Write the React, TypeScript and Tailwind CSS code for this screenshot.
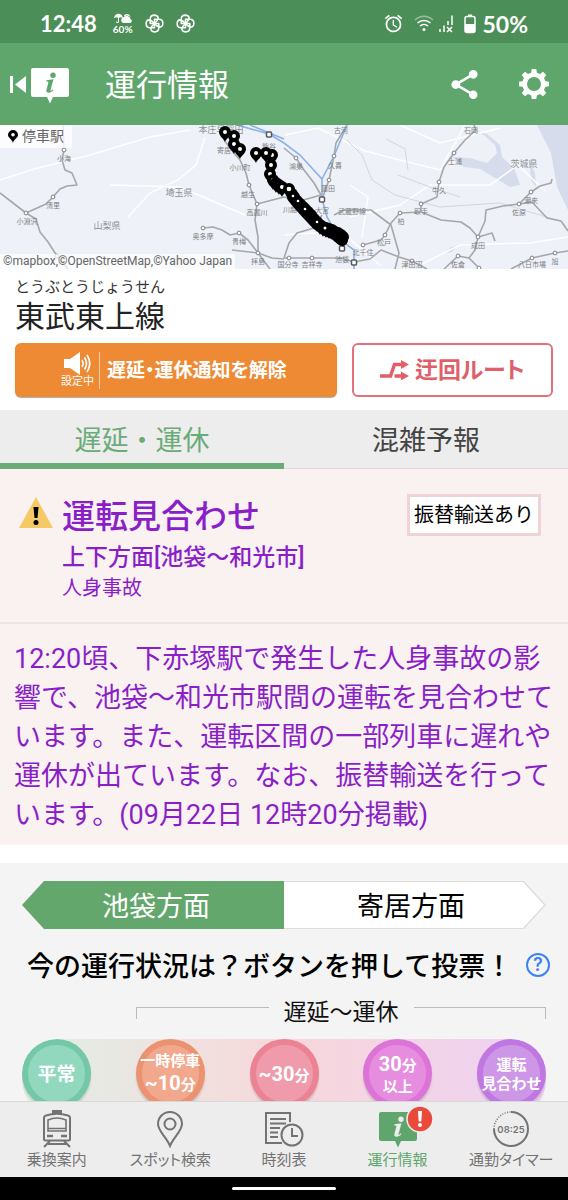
import React from "react";
import { MdAlarm, MdShare } from "react-icons/md";

const GEAR_ANGLES = [0, 45, 90, 135, 180, 225, 270, 315];
const BLADE_ANGLES = [0, 90, 180, 270];

function InfoBubble({ className, mark }: { className: string; mark: string }) {
  return (
    <svg viewBox="0 0 38 36" className={className} aria-hidden="true">
      <path d="M2 0h34a2 2 0 0 1 2 2v25a2 2 0 0 1-2 2H22l-3 6.500L16 29H2a2 2 0 0 1-2-2V2a2 2 0 0 1 2-2Z" fill="currentColor" />
      <circle cx="22" cy="7.200" r="2.700" fill={mark} />
      <path d="M15.500 12.200l7-1-3 10.800c-.3 1.200.4 1.300 2-.7l.9.700c-2.200 3.200-8 4-7 0l2-7.500c.2-.9-.5-1-2.100-1Z" fill={mark} />
    </svg>
  );
}

function Pinwheel({ className }: { className: string }) {
  return (
    <svg viewBox="-10 -10 20 20" className={className} fill="none" stroke="currentColor" strokeWidth="1.700" strokeLinejoin="round" aria-hidden="true">
      {BLADE_ANGLES.map((a) => (
        <path key={a} d="M0 0H-4.500V-4.500Q-4.500-8.800 0-8.800 3.800-8.500 3.800-5.500 3.500-3 0 0Z" transform={`rotate(${a})`} />
      ))}
    </svg>
  );
}

function StatusBar() {
  return (
    <div className="flex h-[43px] shrink-0 items-center justify-between bg-[#4b8e57] px-10 pt-1 font-['Lato',sans-serif] text-white">
      <div className="flex items-center">
        <span className="text-[22px] leading-6 font-bold">12:48</span>
        <span className="ml-4 flex w-5 flex-col items-center">
          <svg viewBox="0 0 20 11" className="h-[11px] w-5" fill="currentColor" aria-hidden="true">
            <path d="M1 5C1.500 2 3.500.8 5.500.8S9.500 2 10 5L7.500 4.300 6 4.800V8.500a1.500 1.500 0 0 1-3 0h1c0 .7 1 .7 1 0V4.800L3.500 4.300Z" />
            <path d="M10 10a3 3 0 0 1 .6-5.700A4 4 0 0 1 17.500 6a2.200 2.200 0 0 1 0 4Z" />
            <path d="M11 2.500a3.500 3.500 0 0 1 6 .6l1.200 1.600C16 2 13 2 11 3.400Z" />
          </svg>
          <span className="text-[10px] leading-[10px] font-bold">60%</span>
        </span>
        <Pinwheel className="ml-3 size-[19px]" />
        <Pinwheel className="ml-3 size-[19px]" />
      </div>
      <div className="flex items-center">
        <MdAlarm className="size-[21px]" />
        <svg viewBox="0 0 20 17" className="ml-2.5 h-[17px] w-5" fill="none" stroke="currentColor" strokeWidth="1.600" aria-hidden="true">
          <path d="M1 5a13 13 0 0 1 18 0" opacity=".4" />
          <path d="M3.500 8a9.500 9.500 0 0 1 13 0M6 11a6 6 0 0 1 8 0" />
          <circle cx="10" cy="14.500" r="1.500" fill="currentColor" stroke="none" />
        </svg>
        <svg viewBox="0 0 16 18" className="ml-1 h-[18px] w-4" fill="none" stroke="currentColor" strokeWidth="1.500" aria-hidden="true">
          <path d="M2 14v3M6 10.500V17M10 6v4M14 .5V10M9 12l5 5M14 12l-5 5" />
        </svg>
        <svg viewBox="0 0 12 20" className="ml-2.5 h-5 w-3" aria-hidden="true">
          <path d="M4 .5h4V3H4Z" fill="currentColor" />
          <rect x="1" y="2.500" width="10" height="16" rx="2" fill="none" stroke="currentColor" strokeWidth="1.500" />
          <path d="M1 10h10v7a2 2 0 0 1-2 2H3a2 2 0 0 1-2-2Z" fill="currentColor" />
        </svg>
        <span className="ml-1.5 text-[23px] leading-6 font-bold">50%</span>
      </div>
    </div>
  );
}

function Header() {
  return (
    <header className="flex h-[82px] shrink-0 items-center bg-[#5fa66d] pr-[19px] pl-2.5 text-white">
      <button type="button" aria-label="戻る" className="flex items-center gap-[5px]">
        <svg viewBox="0 0 16 17" className="h-[17px] w-4" fill="currentColor" aria-hidden="true">
          <path d="M0 0h3v17H0ZM16 0v17L5 8.500Z" />
        </svg>
        <InfoBubble className="mt-1 h-9 w-[38px]" mark="#5fa66d" />
      </button>
      <h1 className="ml-9 flex-1 pt-1 text-[31px] leading-10 font-normal">運行情報</h1>
      <button type="button" aria-label="共有" className="mr-[37px]">
        <MdShare className="size-[35px]" />
      </button>
      <button type="button" aria-label="設定">
        <svg viewBox="-15 -15 30 30" className="size-[30px]" aria-hidden="true">
          <circle r="9.300" fill="none" stroke="currentColor" strokeWidth="4.600" />
          {GEAR_ANGLES.map((a) => (
            <path key={a} d="M-3-10.500L-2.300-15H2.300L3-10.500Z" fill="currentColor" transform={`rotate(${a})`} />
          ))}
        </svg>
      </button>
    </header>
  );
}

const RAILS = [
  "M0 68L26 88L36 94L40 107L48 117L57 131L68 144",
  "M26 88L46 79L53 72L60 64L67 61L77 60L72 48L65 45L62 35L64 25L63 0",
  "M224 15L233 27L240 35L246 48L249 60L257 79L255 95L258 112L258 128L270 144",
  "M203 103L213 102L222 105L230 110L239 108L248 115L258 128",
  "M232 125L258 128L272 133L284 134",
  "M257 79L284 72L300 76L321 70",
  "M284 23L296 33L304 45L314 58L321 70",
  "M322 74L329 55L334 31L336 18L347 0",
  "M334 90L344 85L371 85L391 100L399 128L395 144",
  "M363 120L381 115L385 110L391 98L400 88L421 87L421 79L437 72L439 57L444 42L454 28L465 15L476 5L474 0",
  "M421 87L441 95L461 97L470 103L478 112L475 125L469 133L458 131L444 144",
  "M469 133L480 144M478 112L492 108L495 116",
  "M478 112L485 96L486 85L503 81L519 79L531 67L540 61L551 58L552 54",
  "M519 79L532 77L547 93L561 96L568 106",
  "M511 144L532 133L555 128L568 126",
  "M284 133L341 133L354 137L370 134L381 125L399 132L412 136L427 144",
  "M284 133L289 118L297 108L314 103L322 90",
];

const STATIONS: [number, number][] = [
  [64, 25], [53, 72], [26, 88], [57, 131], [203, 103], [239, 108], [249, 60], [257, 79], [258, 128],
  [296, 33], [334, 31], [329, 55], [454, 28], [439, 57], [421, 79], [400, 88], [385, 110], [363, 120],
  [289, 133], [312, 133], [412, 136], [458, 131], [478, 112], [519, 79], [531, 67], [532, 133], [555, 128], [479, 143],
];

const PLACES: [number, number, string][] = [
  [64, 36, "小海"], [53, 83, "清里"], [27, 99, "小淵沢"], [203, 114, "奥多摩"], [239, 119, "青梅"],
  [248, 72, "越生"], [257, 90, "高麗川"], [240, 45, "小川町"], [224, 28, "寄居"],
  [269, 24, "熊谷"], [296, 44, "鴻巣"], [335, 43, "久喜"], [328, 66, "蓮田"], [341, 8, "古河"],
  [322, 88, "大宮"], [352, 89, "武蔵野線"], [421, 89, "取手"], [401, 99, "柏"], [384, 120, "松戸"],
  [363, 130, "北千住"], [342, 137, "池袋"], [258, 139, "拝島"], [288, 142, "国分寺"], [312, 142, "吉祥寺"],
  [412, 142, "津田沼"], [458, 142, "佐倉"], [478, 123, "成田"], [519, 90, "佐原"], [531, 78, "潮来"],
  [532, 142, "八日市場"], [555, 139, "旭"], [455, 39, "土浦"], [439, 68, "牛久"], [471, 8, "石岡"], [290, 87, "川越"],
];

const PINS: [number, number][] = [
  [234, 11], [225, 7], [234, 19], [240, 24], [272, 30], [266, 28], [256, 28], [271, 40], [270, 49],
  [273, 55], [276, 58], [279, 60], [282, 62], [289, 64], [292, 69], [294, 72], [297, 76], [300, 79], [303, 82],
  [305, 84], [308, 87], [311, 90], [314, 94], [317, 97], [320, 100], [323, 102], [326, 103], [329, 104], [332, 105],
  [335, 107], [338, 108], [341, 110], [343, 112],
];

function RouteMap() {
  return (
    <div className="relative h-36 w-full shrink-0 overflow-hidden bg-[#eef2f8]">
      <svg viewBox="0 0 568 144" preserveAspectRatio="xMidYMid slice" className="size-full" role="img" aria-label="路線図">
        <g fill="#d6dceb">
          <path d="M537 0L543 12L551 28L554 45L557 62L568 85V0Z" />
          <path d="M452 32L470 33L487 38L497 28L495 20L484 10L476 6L487 9L500 20L502 32L514 43L520 60L510 62L500 56L490 50L480 44L464 42Z" />
          <path d="M529 35L535 48L536 62L531 55ZM445 128L451 122L457 121L452 127Z" />
        </g>
        <g fill="none" stroke="#fff" strokeWidth="1.400">
          <path d="M0 55L34 44L90 30L150 12L190 5M128 92L150 68L178 55L196 40L205 12M110 60L180 62L245 90M285 10L318 3L365 26L400 35L440 45L465 0M350 92L400 80L430 60L490 60L518 40L545 66M285 110L340 106L380 140M420 140L460 120L530 118L568 112M400 0L440 18L500 3M350 60L368 72L362 112" />
        </g>
        <path d="M347 15L362 30L372 55L395 70L440 82L500 78L560 96M386 14L405 24L408 45M398 50L430 62L460 72" fill="none" stroke="#d3d6dc" strokeWidth="1" />
        <g fill="none" stroke="#a5a7aa" strokeWidth="1.600" strokeLinejoin="round">
          {RAILS.map((d) => (
            <path key={d} d={d} />
          ))}
        </g>
        <path d="M237 0L269 9L284 18L300 30L322 54L334 31L347 0M322 54V74L327 92L335 106L347 120L354 125V144M250 0L284 14" fill="none" stroke="#8eb0e8" strokeWidth="1.600" />
        <g fill="#fff" stroke="#7f8286">
          {STATIONS.map(([x, y]) => (
            <circle key={`${x}-${y}`} cx={x} cy={y} r="1.900" />
          ))}
        </g>
        <g fill="#fff" stroke="#55595f" strokeWidth="1.500">
          <rect x="266.500" y="7" width="5" height="5" rx="1" />
          <rect x="319.500" y="72" width="5" height="5" rx="1" />
          <rect x="351.500" y="135" width="5" height="5" rx="1" />
          <rect x="339.500" y="121" width="5" height="5" rx="1" />
        </g>
        <g fill="#7c7f84" fontSize="7" textAnchor="middle">
          {PLACES.map(([x, y, name]) => (
            <text key={name} x={x} y={y}>{name}</text>
          ))}
        </g>
        <g fill="#8d9096" fontSize="9" textAnchor="middle">
          <text x="221" y="8">本庄早稲田</text>
          <text x="179" y="71">埼玉県</text>
          <text x="107" y="104">山梨県</text>
          <text x="524" y="42">茨城県</text>
        </g>
        {PINS.map(([x, y]) => (
          <g key={`${x}-${y}`}>
            <path d={`M${x} ${y + 10}C${x - 1} ${y + 7} ${x - 6} ${y + 4} ${x - 6} ${y}a6 6 0 0 1 12 0C${x + 6} ${y + 4} ${x + 1} ${y + 7} ${x} ${y + 10}Z`} fill="#000" />
            <circle cx={x} cy={y} r="2" fill="#fff" />
          </g>
        ))}
        <path d="M293 72L297 77L305 86L317 99L326 105L335 109L342 115" fill="none" stroke="#000" strokeWidth="12" strokeLinecap="round" strokeLinejoin="round" />
        <g fill="#fff">
          <circle cx="289" cy="64" r="2.300" />
          <circle cx="293" cy="71" r="1.300" />
          <circle cx="298" cy="76" r="1.300" />
          <circle cx="305" cy="84" r="1.300" />
          <circle cx="317" cy="97" r="1.300" />
          <circle cx="325" cy="103" r="1.500" />
        </g>
      </svg>
      <div className="absolute top-0 left-0 flex h-[23px] items-center gap-1 bg-white/80 px-2 text-[14px] text-[#666]">
        <svg viewBox="0 0 10 13" className="h-[13px] w-2.5" aria-hidden="true">
          <path d="M5 13C4.500 9.500 0 8 0 4.800a5 4.800 0 0 1 10 0C10 8 5.500 9.500 5 13Z" />
          <circle cx="5" cy="4.700" r="1.800" fill="#fff" />
        </svg>
        停車駅
      </div>
      <div className="absolute bottom-0 left-0 bg-white/70 px-[3px] font-['Roboto',sans-serif] text-[12px] leading-[15px] text-[#666]">
        ©mapbox,©OpenStreetMap,©Yahoo Japan
      </div>
    </div>
  );
}

function LineHeading() {
  return (
    <section className="shrink-0 px-[15px] pt-2 pb-[13px]">
      <p className="text-[15px] leading-5 text-[#333]">とうぶとうじょうせん</p>
      <h2 className="text-[30px] leading-10 font-normal text-[#222]">東武東上線</h2>
      <div className="mt-1.5 grid grid-cols-[8fr_5fr] gap-[15px]">
        <button type="button" className="flex h-[54px] items-center justify-center rounded-md bg-[#ee8a33] text-white shadow-[0_1px_1px_#aaa]">
          <span className="flex flex-col items-center border-r border-white/60 pr-[5px]">
            <svg viewBox="0 0 27 23" className="h-[23px] w-[27px]" fill="none" stroke="currentColor" strokeWidth="1.700" aria-hidden="true">
              <path d="M0 7h6L16 0v23L6 16H0Z" fill="currentColor" stroke="none" />
              <path d="M18 8q2 3.500 0 7M20.500 5.500q4 6 0 12M23 3q5.500 8.500 0 17" />
            </svg>
            <span className="text-[11px] leading-[14px]">設定中</span>
          </span>
          <span className="mr-1 ml-[7px] pt-0.5 text-[19px] font-bold [font-feature-settings:'palt']">遅延・運休通知を解除</span>
        </button>
        <button type="button" className="flex h-[54px] items-center justify-center gap-1.5 rounded-md border-2 border-[#e2717b] bg-white text-[#e0606a]">
          <svg viewBox="0 0 29 20" className="h-5 w-[29px]" fill="none" stroke="currentColor" strokeWidth="3.500" aria-hidden="true">
            <path d="M0 16h10.500L14.500 4.500H22M14.500 16H22" />
            <path d="M21 0l8 4.500L21 9ZM21 11.500l8 4.500-8 4.500Z" fill="currentColor" stroke="none" />
          </svg>
          <span className="pt-0.5 text-[23px] font-bold [font-feature-settings:'palt']">迂回ルート</span>
        </button>
      </div>
    </section>
  );
}

function Tabs() {
  return (
    <div role="tablist" className="grid h-[59px] shrink-0 grid-cols-2 bg-[#ededed] text-[27px]">
      <button type="button" role="tab" aria-selected="true" className="border-b-[6px] border-[#6aab78] pt-2.5 text-[#6aab78]">
        遅延・運休
      </button>
      <button type="button" role="tab" aria-selected="false" className="border-b border-[#ddd] pt-[5px] text-[#444]">
        混雑予報
      </button>
    </div>
  );
}

function Alert() {
  return (
    <section className="shrink-0 bg-[#faf2f1] text-[#8a1fc8]">
      <div className="flex items-start border-b-2 border-[#eee6e5] pt-[25px] pr-[27px] pb-5 pl-[18px]">
        <svg viewBox="0 0 36 32" className="mt-[3px] h-8 w-9 shrink-0" aria-hidden="true">
          <path d="M18 0L35 31H1Z" fill="#f5ca66" />
          <path d="M15.500 10h5l-1 11h-3Z" fill="#000" />
          <circle cx="18" cy="25.500" r="2.500" fill="#000" />
        </svg>
        <div className="ml-2 flex-1">
          <h3 className="text-[33px] leading-[46px] font-medium">運転見合わせ</h3>
          <p className="pt-0.5 text-[23px] leading-8 font-medium">上下方面[池袋〜和光市]</p>
          <p className="text-[20px] leading-7">人身事故</p>
        </div>
        <span className="border-[3px] border-[#f0d3d7] bg-white px-1 py-1 text-[20px] leading-7 text-black">振替輸送あり</span>
      </div>
      <p className="pt-4 pr-3 pb-2.5 pl-[14px] text-[27px] leading-[39px]">
        12:20頃、下赤塚駅で発生した人身事故の影響で、池袋〜和光市駅間の運転を見合わせています。また、運転区間の一部列車に遅れや運休が出ています。なお、振替輸送を行っています。(09月22日 12時20分掲載)
      </p>
    </section>
  );
}

const LARGE = "text-[20px] leading-6";
const MEDIUM = "text-[19px] leading-6";
const SMALL = "text-[15px] leading-[19px]";

type VoteLine = { text: string; size: string; unit?: string };

const VOTES: { lines: VoteLine[]; color: string }[] = [
  { lines: [{ text: "平常", size: MEDIUM }], color: "border-[#74c8a8] bg-[#91d8bf]" },
  { lines: [{ text: "一時停車", size: SMALL }, { text: "~10", size: LARGE, unit: "分" }], color: "border-[#eb9273] bg-[#f2a88c]" },
  { lines: [{ text: "~30", size: LARGE, unit: "分" }], color: "border-[#ec8394] bg-[#f09bab]" },
  { lines: [{ text: "30", size: LARGE, unit: "分" }, { text: "以上", size: SMALL }], color: "border-[#dc74d8] bg-[#e68de0]" },
  { lines: [{ text: "運転", size: SMALL }, { text: "見合わせ", size: SMALL }], color: "border-[#c077e2] bg-[#ce96e6]" },
];

function Vote() {
  return (
    <section className="mt-[18px] shrink-0 bg-[#f4f4f4] px-[22px] pt-[18px] pb-6">
      <div className="grid h-12 grid-cols-2 text-[27px]">
        <button type="button" className="bg-[#63a76c] pt-1 pl-1.5 text-white [clip-path:polygon(0_50%,22px_0,100%_0,100%_100%,22px_100%)]">
          池袋方面
        </button>
        <button type="button" className="bg-[#ddd] py-px pr-[2px] [clip-path:polygon(0_0,calc(100%_-_22px)_0,100%_50%,calc(100%_-_22px)_100%,0_100%)]">
          <span className="flex size-full items-center justify-center bg-white pt-1 pr-1.5 text-black [clip-path:polygon(0_0,calc(100%_-_21px)_0,100%_50%,calc(100%_-_21px)_100%,0_100%)]">
            寄居方面
          </span>
        </button>
      </div>
      <div className="mt-3.5 flex items-center justify-between pl-[5px]">
        <h3 className="pt-1 text-[27px] leading-10 font-medium whitespace-nowrap text-black">今の運行状況は？ボタンを押して投票！</h3>
        <button type="button" aria-label="ヘルプ" className="-mr-1 size-6 shrink-0 rounded-full border-2 border-[#3d83f0] font-['Inter',sans-serif] text-[18px] leading-5 font-semibold text-[#3d83f0]">
          ?
        </button>
      </div>
      <div className="mt-1.5 ml-[114px] flex items-start justify-between">
        <span className="mt-3.5 mr-[15px] h-3 flex-1 border-t border-l border-[#bbb]" />
        <span className="pt-1 text-[23px] leading-8 text-[#111]">遅延〜運休</span>
        <span className="mt-3.5 ml-[15px] h-3 flex-1 border-t border-r border-[#bbb]" />
      </div>
      <div className="mt-2.5 flex justify-between bg-linear-to-r from-[#dff0e6] via-[#f8d8da] to-[#edd0f3] [clip-path:inset(0_0_-8px_0_round_35px)]">
        {VOTES.map((vote) => (
          <button
            type="button"
            key={vote.lines[0].text}
            className={`flex size-[69px] flex-col items-center justify-center rounded-full border-[6px] pt-0.5 font-bold whitespace-nowrap text-white shadow-[0_3px_2px_#0002] ${vote.color}`}
          >
            {vote.lines.map((line) => (
              <span key={line.text} className={line.size}>
                {line.text}
                {line.unit && <span className="text-[15px]">{line.unit}</span>}
              </span>
            ))}
          </button>
        ))}
      </div>
    </section>
  );
}

function TrainIcon() {
  return (
    <svg viewBox="0 0 30 38" className="h-[38px] w-[30px]" fill="none" stroke="currentColor" strokeWidth="2" aria-hidden="true">
      <path d="M11 1h8v2h-8ZM2 29V8q0-2 2-2.500Q15 2 26 5.500q2 .5 2 2.500v21q0 1.500-1.500 1.500h-23Q2 30.500 2 29Z" />
      <path d="M6 21V10q9-4 18 0v11ZM6 18.500h18" strokeWidth="1.600" />
      <path d="M5 26h6M19 26h6" strokeWidth="2.600" />
      <path d="M8 31l-6 6M22 31l6 6M6 34h18" />
    </svg>
  );
}

function PinIcon() {
  return (
    <svg viewBox="0 0 28 38" className="h-[38px] w-7" fill="none" stroke="currentColor" strokeWidth="2" aria-hidden="true">
      <path d="M14 36C11 28 2 21 2 14a12 12 0 0 1 24 0c0 7-9 14-12 22Z" />
      <circle cx="14" cy="14" r="5.500" />
    </svg>
  );
}

function TimetableIcon() {
  return (
    <svg viewBox="0 0 40 38" className="h-[38px] w-10" fill="none" stroke="currentColor" strokeWidth="2" aria-hidden="true">
      <path d="M18 33H2V3h24v9M6 9h16M6 13.500h16M6 18h10M6 22.500h8M6 27h8" />
      <circle cx="28" cy="25" r="10.500" />
      <path d="M28 18v8h6" />
    </svg>
  );
}

function TimerIcon() {
  return (
    <svg viewBox="0 0 38 38" className="size-[38px]" fill="none" stroke="currentColor" aria-hidden="true">
      <path d="M19 2a17 17 0 1 1-17 17" strokeWidth="2" />
      <path d="M2 19A17 17 0 0 1 19 2" strokeWidth="1.500" strokeDasharray="1 1.500" />
      <text x="19" y="22.500" textAnchor="middle" fontSize="9.500" fontWeight="600" fontFamily="Inter, sans-serif" fill="currentColor" stroke="none">08:25</text>
    </svg>
  );
}

function NewsIcon() {
  return (
    <span className="relative flex h-[38px] items-end">
      <InfoBubble className="h-9 w-[38px]" mark="#ededed" />
      <svg viewBox="0 0 28 28" className="absolute -top-[5px] left-[27px] size-7" aria-hidden="true">
        <circle cx="14" cy="14" r="13" fill="#ea4a3c" stroke="#ededed" strokeWidth="1.500" />
        <path d="M12 6h4l-.7 10.500h-2.600Z" fill="#fff" />
        <circle cx="14" cy="20" r="2" fill="#fff" />
      </svg>
    </span>
  );
}

const NAV = [
  { label: "乗換案内", icon: <TrainIcon />, active: false },
  { label: "スポット検索", icon: <PinIcon />, active: false },
  { label: "時刻表", icon: <TimetableIcon />, active: false },
  { label: "運行情報", icon: <NewsIcon />, active: true },
  { label: "通勤タイマー", icon: <TimerIcon />, active: false },
];

function BottomNav() {
  return (
    <nav className="relative grid h-[76px] shrink-0 grid-cols-5 border-t border-[#d8d8d8] bg-[#ededed]">
      {NAV.map((item) => (
        <a
          key={item.label}
          href="#"
          aria-current={item.active ? "page" : undefined}
          className={`flex flex-col items-center pt-2 text-[15px] leading-6 ${item.active ? "text-[#5fa66d]" : "text-[#737373]"}`}
        >
          {item.icon}
          <span className="whitespace-nowrap [font-feature-settings:'palt']">{item.label}</span>
        </a>
      ))}
    </nav>
  );
}

export default function App() {
  return (
    <div className="flex h-screen flex-col bg-white font-['Roboto','Noto_Sans_CJK_JP',sans-serif]" lang="ja">
      <StatusBar />
      <Header />
      <main className="flex min-h-0 flex-1 flex-col overflow-y-auto [scrollbar-width:none]">
        <RouteMap />
        <LineHeading />
        <Tabs />
        <Alert />
        <Vote />
      </main>
      <BottomNav />
      <div className="flex h-[23px] shrink-0 items-center justify-center bg-black">
        <div className="h-[3px] w-[104px] rounded-full bg-white" />
      </div>
    </div>
  );
}
